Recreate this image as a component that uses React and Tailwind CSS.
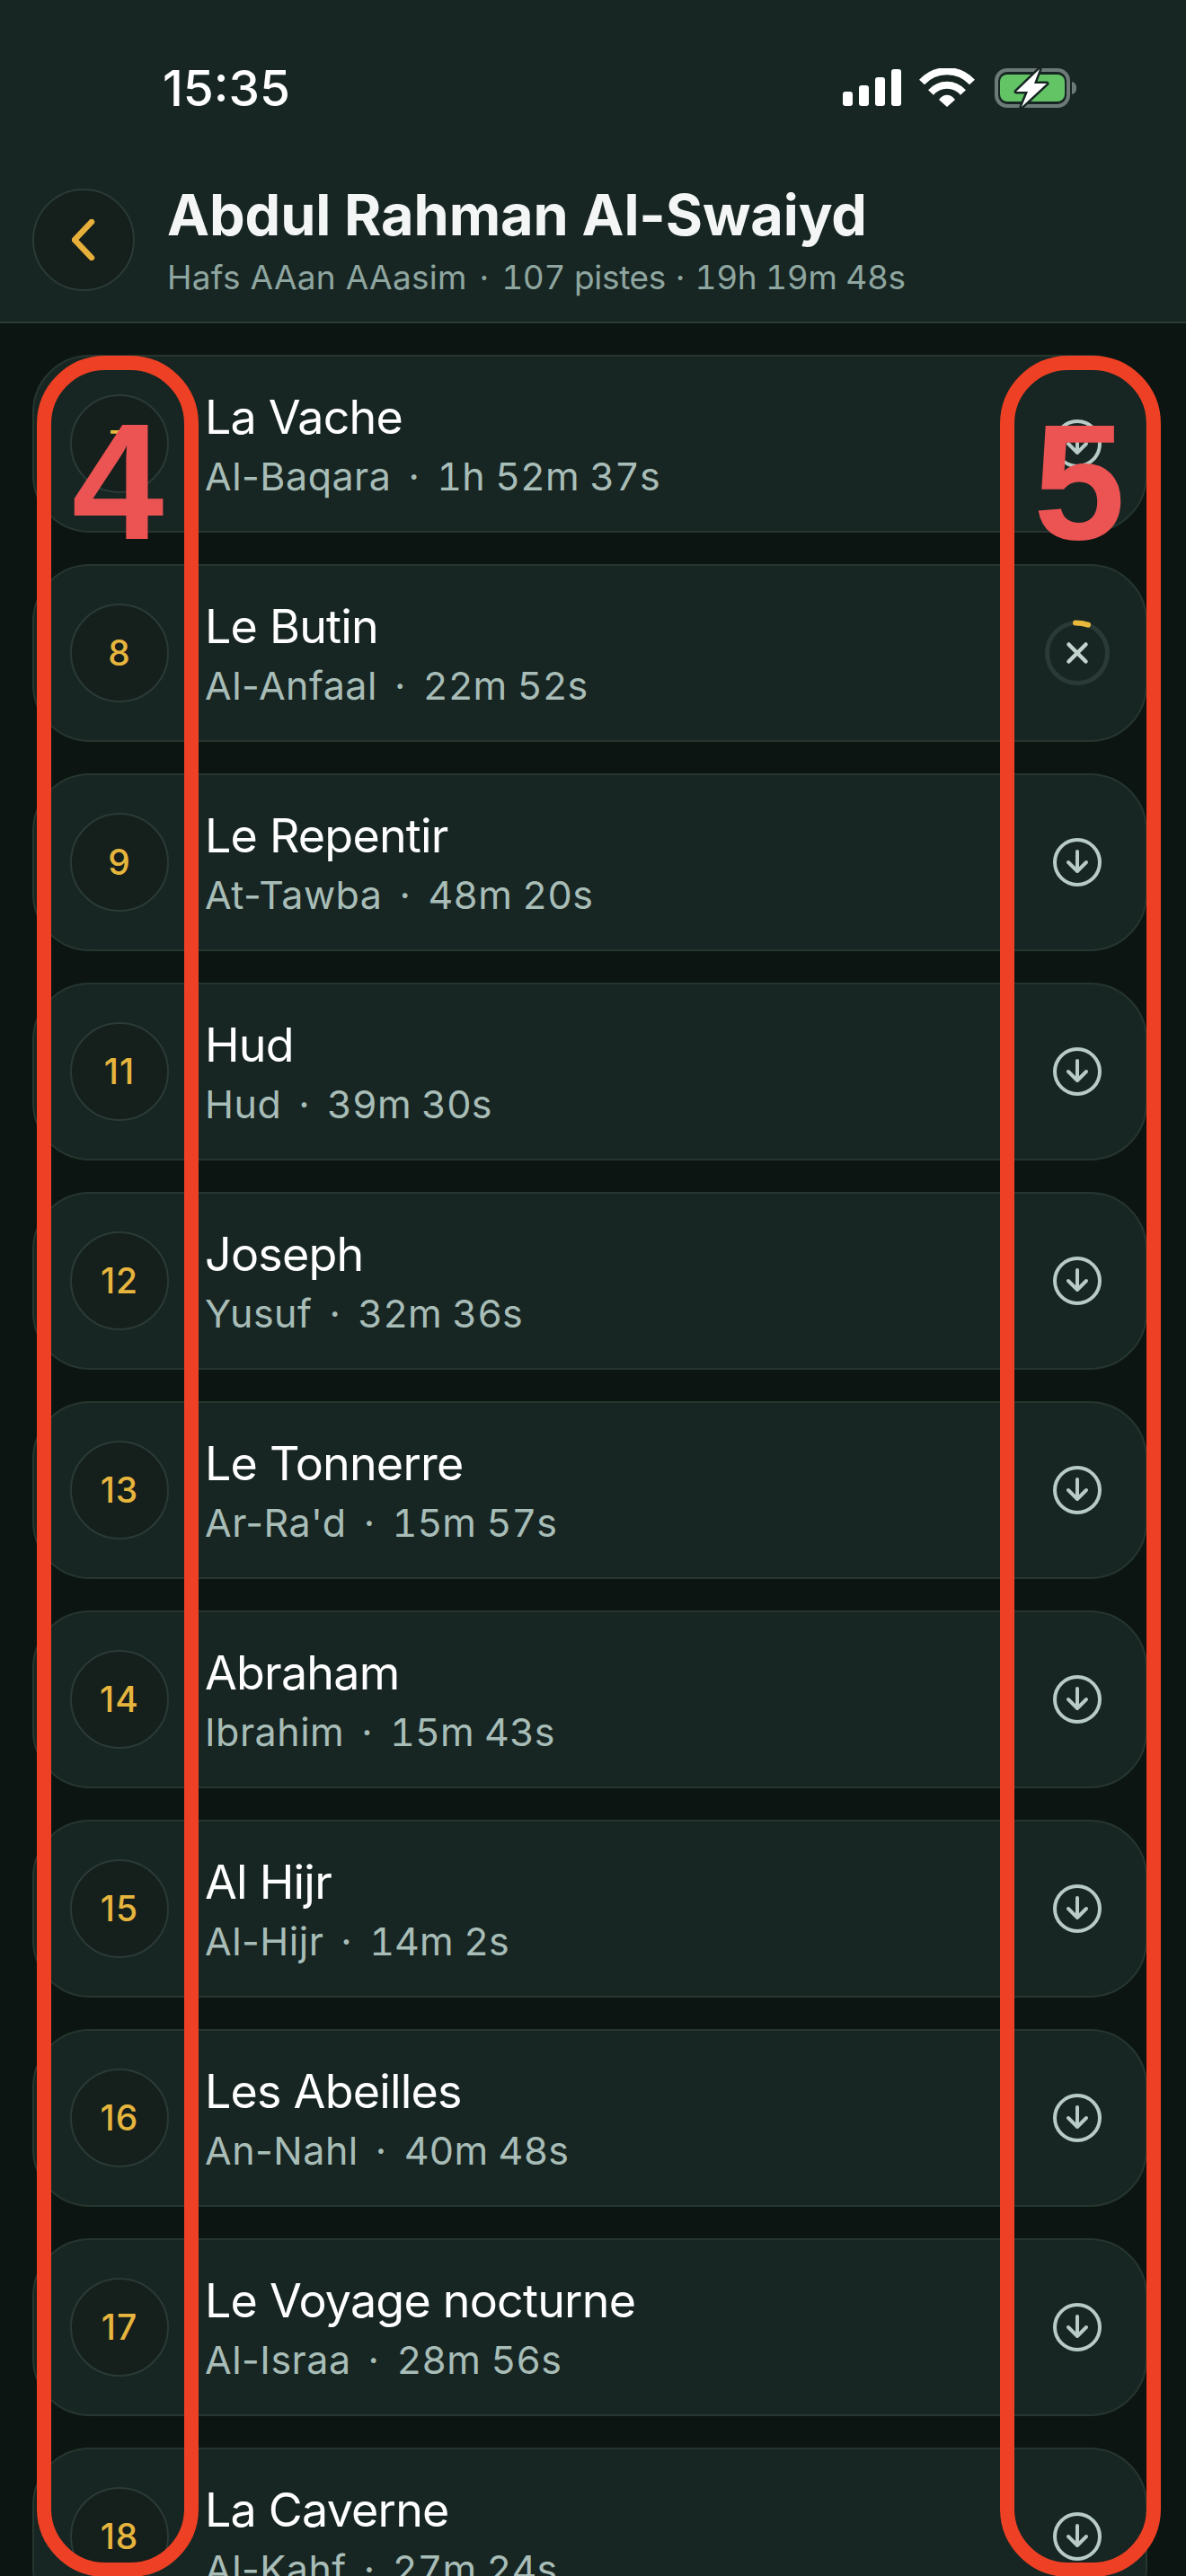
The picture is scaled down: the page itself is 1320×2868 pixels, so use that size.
const tracks = [
  { n: 7, title: 'La Vache', sub: 'Al-Baqara', time: '1h 52m 37s' },
  { n: 8, title: 'Le Butin', sub: 'Al-Anfaal', time: '22m 52s', loading: true },
  { n: 9, title: 'Le Repentir', sub: 'At-Tawba', time: '48m 20s' },
  { n: 11, title: 'Hud', sub: 'Hud', time: '39m 30s' },
  { n: 12, title: 'Joseph', sub: 'Yusuf', time: '32m 36s' },
  { n: 13, title: 'Le Tonnerre', sub: "Ar-Ra'd", time: '15m 57s' },
  { n: 14, title: 'Abraham', sub: 'Ibrahim', time: '15m 43s' },
  { n: 15, title: 'Al Hijr', sub: 'Al-Hijr', time: '14m 2s' },
  { n: 16, title: 'Les Abeilles', sub: 'An-Nahl', time: '40m 48s' },
  { n: 17, title: 'Le Voyage nocturne', sub: 'Al-Israa', time: '28m 56s' },
  { n: 18, title: 'La Caverne', sub: 'Al-Kahf', time: '27m 24s' },
]

function StatusIcons() {
  return (
    <svg width="262" height="44" viewBox="0 0 262 44" fill="none">
      <rect x="0" y="26" width="11" height="16" rx="3" fill="#fff" />
      <rect x="18" y="19" width="11" height="23" rx="3" fill="#fff" />
      <rect x="36" y="10" width="11" height="32" rx="3" fill="#fff" />
      <rect x="54" y="1" width="11" height="41" rx="3" fill="#fff" />
      <path d="M88 15.5C103 -1 129 -1 144 15.5" stroke="#fff" strokeWidth="8" />
      <path d="M98 27C108 16 124 16 134 27" stroke="#fff" strokeWidth="8" />
      <path d="M107 35C112 28 120 28 125 35L116 43Z" fill="#fff" />
      <rect x="171" y="2" width="80" height="40" rx="12" stroke="#6e7a77" strokeWidth="4" />
      <path d="M255 15C259 16 260 19 260 22C260 25 259 28 255 29Z" fill="#6e7a77" />
      <rect x="175" y="7" width="72" height="30" rx="8" fill="#62c465" />
      <path d="M219 1L193 26H206L199 43L227 17H213Z" fill="#fff" stroke="#172623" strokeWidth="5" paintOrder="stroke" strokeLinejoin="round" />
    </svg>
  )
}

function DownloadIcon() {
  return (
    <svg width="56" height="56" viewBox="0 0 56 56" fill="none" stroke="#b9cbc6" strokeWidth="4" strokeLinecap="round" strokeLinejoin="round">
      <circle cx="28" cy="28" r="25" />
      <path d="M28 16V37" />
      <path d="M18 28L28 38L38 28" />
    </svg>
  )
}

function LoadingIcon() {
  return (
    <svg width="74" height="74" viewBox="0 0 74 74" fill="none" strokeLinecap="round">
      <circle cx="37" cy="37" r="33.5" stroke="#2a3a36" strokeWidth="5" />
      <path d="M35 3.6Q42 3.6 49 5.7" stroke="#e8b93a" strokeWidth="6" />
      <path d="M27.5 27.5L46.5 46.5M46.5 27.5L27.5 46.5" stroke="#c3d3ce" strokeWidth="4.5" />
    </svg>
  )
}

function TrackRow({ track }) {
  return (
    <div className="flex h-[198px] shrink-0 items-center rounded-[64px] border-2 border-[#26362f] bg-[#172623] pr-[22px] pl-[40px]">
      <div className="flex h-[110px] w-[110px] shrink-0 items-center justify-center rounded-full border-2 border-[#2a3a36] bg-[#151f1c] text-[39px] font-medium tracking-[1px] text-[#e6b53e]">
        {track.n}
      </div>
      <div className="ml-[40px] min-w-0 flex-1">
        <div className="text-[52px] leading-[66px] tracking-[-0.8px] text-white">{track.title}</div>
        <div className="mt-[5px] text-[43px] leading-[54px] tracking-[0.5px] text-[#a8bdb7]">
          {track.sub}
          <span className="mx-[19px]">·</span>
          <span className="tracking-[0px] tabular-nums">{track.time}</span>
        </div>
      </div>
      <div className="flex w-[108px] shrink-0 items-center justify-center">
        {track.loading ? <LoadingIcon /> : <DownloadIcon />}
      </div>
    </div>
  )
}

export default function App() {
  return (
    <div className="relative h-[2868px] w-[1320px] overflow-hidden bg-[#0c1512] font-['Inter',sans-serif]">
      <header className="h-[360px] border-b-2 border-[#2a3a36] bg-[#172623]">
        <div className="flex h-[44px] translate-y-[76px] items-center justify-between pr-[120px] pl-[181px]">
          <span className="text-[55px] font-medium leading-none text-white">15:35</span>
          <StatusIcons />
        </div>
        <div className="mt-[157px] flex items-center px-[36px]">
          <button className="flex h-[114px] w-[114px] shrink-0 items-center justify-center rounded-full border-2 border-[#2a3a36] bg-[#151f1c]">
            <svg width="26" height="46" viewBox="0 0 26 46" fill="none" stroke="#e6b03a" strokeWidth="6.5" strokeLinecap="round" strokeLinejoin="round">
              <path d="M22 3L3 23L22 43" />
            </svg>
          </button>
          <div className="ml-[36px] min-w-0">
            <h1 className="text-[63px] font-bold leading-[76px] tracking-[-0.1px] text-[#f3f6f5]">Abdul Rahman Al-Swaiyd</h1>
            <p className="mt-[9px] text-[37px] leading-[46px] tracking-[0.3px] text-[#8fa6a0]">
              Hafs AAan AAasim
              <span className="mx-[3px]"> · </span>
              <span className="tracking-[-0.3px] tabular-nums">107 pistes</span>
              {' · '}
              <span className="tracking-[-0.3px] tabular-nums">19h 19m 48s</span>
            </p>
          </div>
        </div>
      </header>

      <div className="flex flex-col gap-[35px] pt-[35px] pr-[43px] pl-[36px]">
        {tracks.map((t) => (
          <TrackRow key={t.n} track={t} />
        ))}
      </div>

      {/* annotations drawn over the screenshot */}
      <div className="absolute top-[396px] left-[41px] h-[2473px] w-[180px] rounded-[76px] border-[16px] border-[#ee4024]" />
      <div className="absolute top-[396px] left-[1113px] h-[2473px] w-[179px] rounded-[76px] border-[16px] border-[#ee4024]" />
      <span className="absolute top-[432px] left-[80px] font-['Liberation_Sans',sans-serif] text-[184px] leading-[208px] font-bold text-[#ec5353]">4</span>
      <span className="absolute top-[432px] left-[1150px] font-['Liberation_Sans',sans-serif] text-[184px] leading-[208px] font-bold text-[#ec5353]">5</span>
    </div>
  )
}
